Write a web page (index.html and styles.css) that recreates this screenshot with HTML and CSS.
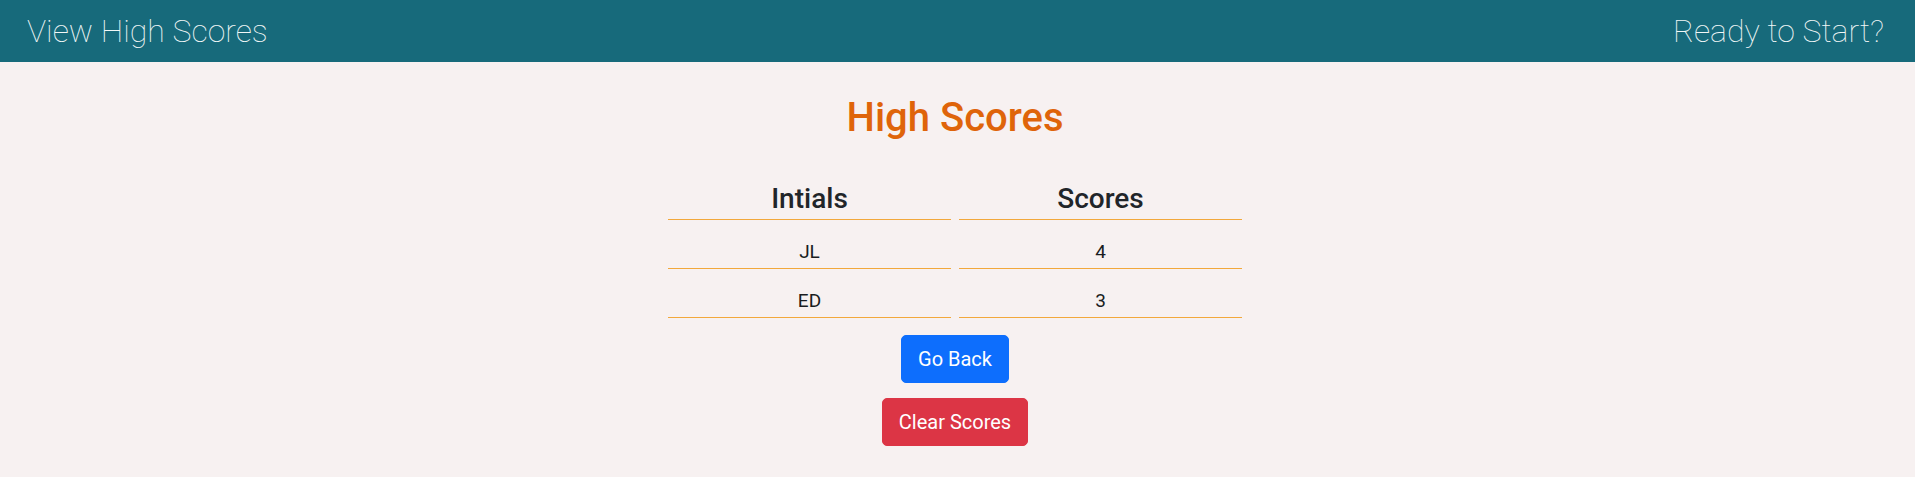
FILE: index.html
```html
<!DOCTYPE html>
<html lang="en">
<head>
<meta charset="utf-8">
<title>High Scores</title>
<link rel="stylesheet" href="styles.css">
</head>
<body>
<header class="topbar">
  <span class="topbar-link">View High Scores</span>
  <span class="topbar-link">Ready to Start?</span>
</header>
<main class="content">
  <h1 class="title">High Scores</h1>
  <div class="scores">
    <div class="cell head">Intials</div>
    <div class="cell head">Scores</div>
    <div class="cell">JL</div>
    <div class="cell">4</div>
    <div class="cell">ED</div>
    <div class="cell">3</div>
  </div>
  <div class="actions">
    <button class="btn btn-primary">Go Back</button>
    <button class="btn btn-danger">Clear Scores</button>
  </div>
</main>
</body>
</html>
```
FILE: styles.css
```css
* { box-sizing: border-box; }
html, body { margin: 0; padding: 0; }
body {
  background: #f7f1f1;
  font-family: Roboto, "Liberation Sans", sans-serif;
  color: #212529;
  height: 477px;
  overflow: hidden;
}
.topbar {
  display: flex;
  justify-content: space-between;
  align-items: center;
  background: #176a7b;
  color: #f2f7f7;
  height: 62px;
  padding: 7px 31px 7px 27px;
}
.topbar-link {
  font-size: 32px;
  font-weight: 100;
  line-height: 48px;
}
.content {
  display: flex;
  flex-direction: column;
  align-items: center;
  padding-top: 32px;
  padding-right: 5px;
}
.title {
  margin: 0;
  font-size: 40px;
  font-weight: 500;
  line-height: 48px;
  color: #df640a;
}
.scores {
  display: grid;
  grid-template-columns: 283px 283px;
  column-gap: 8px;
  margin-top: 22px;
}
.cell {
  text-align: center;
  font-size: 19px;
  font-weight: 400;
  line-height: 28px;
  padding: 18px 0 2px;
  border-bottom: 1px solid #f2a83c;
  color: #1a1d21;
}
.cell.head {
  font-size: 28px;
  font-weight: 500;
  line-height: 34px;
  padding: 18px 0 3px;
  color: #212529;
}
.actions {
  display: flex;
  flex-direction: column;
  align-items: center;
  gap: 15px;
  margin-top: 17px;
}
.btn {
  font-family: Roboto, "Liberation Sans", sans-serif;
  font-size: 20px;
  font-weight: 400;
  line-height: 30px;
  padding: 8px 16px;
  border: 1px solid transparent;
  border-radius: 5px;
  color: #ffffff;
  cursor: pointer;
}
.btn-primary { background: #0d6efd; border-color: #0d6efd; }
.btn-danger { background: #dc3545; border-color: #dc3545; }
```
